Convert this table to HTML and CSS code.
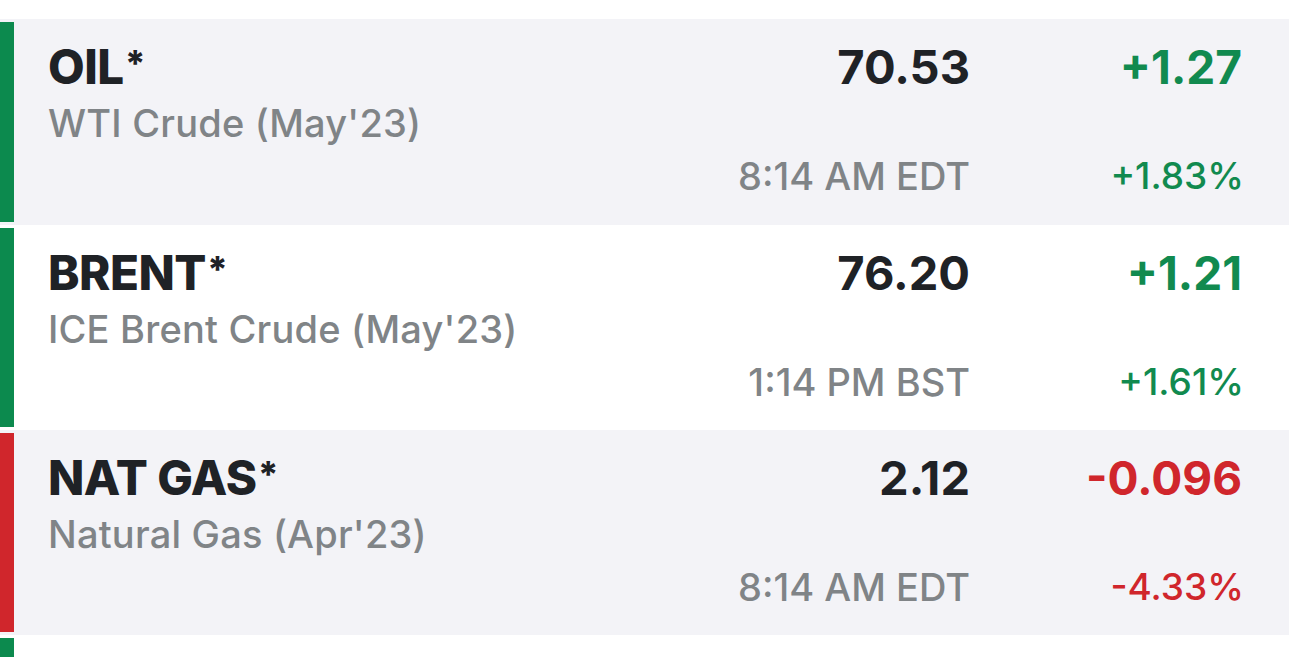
FILE: index.html
```html
<!DOCTYPE html>
<html>
<head>
<meta charset="utf-8">
<link rel="stylesheet" href="styles.css">
</head>
<body>
<div class="list">
  <div class="quote up shaded">
    <div class="bar"></div>
    <div class="body">
      <div class="name">OIL<span class="star">*</span></div>
      <div class="desc">WTI Crude (May'23)</div>
      <div class="price">70.53</div>
      <div class="chg">+1.27</div>
      <div class="time">8:14 AM EDT</div>
      <div class="pct">+1.83%</div>
    </div>
  </div>
  <div class="quote up">
    <div class="bar"></div>
    <div class="body">
      <div class="name">BRENT<span class="star">*</span></div>
      <div class="desc">ICE Brent Crude (May'23)</div>
      <div class="price">76.20</div>
      <div class="chg">+1.21</div>
      <div class="time">1:14 PM BST</div>
      <div class="pct">+1.61%</div>
    </div>
  </div>
  <div class="quote down shaded">
    <div class="bar"></div>
    <div class="body">
      <div class="name">NAT GAS<span class="star">*</span></div>
      <div class="desc">Natural Gas (Apr'23)</div>
      <div class="price">2.12</div>
      <div class="chg">-0.096</div>
      <div class="time">8:14 AM EDT</div>
      <div class="pct">-4.33%</div>
    </div>
  </div>
  <div class="quote up">
    <div class="bar"></div>
    <div class="body"></div>
  </div>
</div>
</body>
</html>
```

FILE: styles.css
```css
html, body {
  margin: 0;
  padding: 0;
  background: #ffffff;
}

body {
  font-family: "Inter", "Liberation Sans", sans-serif;
  overflow: hidden;
  height: 657px;
}

.list {
  padding-top: 19px;
  display: flex;
  flex-direction: column;
}

.quote {
  display: flex;
  height: 205px;
  flex-shrink: 0;
  background: #ffffff;
}

.quote:first-child {
  height: 206px;
}

.quote.shaded {
  background: #f3f3f7;
}

.bar {
  width: 14px;
  margin: 3px 0;
  flex-shrink: 0;
}

.up .bar {
  background: #0c8a4e;
}

.down .bar {
  background: #d0262c;
}

.body {
  flex: 1;
  display: grid;
  grid-template-columns: 1fr auto 272px;
  grid-template-rows: 56px 56px 50px;
  padding: 20px 47px 0 34px;
}

.name {
  grid-column: 1;
  grid-row: 1;
  font-size: 47.5px;
  line-height: 56px;
  font-weight: 800;
  color: #1f2226;
  letter-spacing: -0.5px;
}

.star {
  font-size: 36px;
  vertical-align: 8px;
  line-height: 0;
  margin-left: 1px;
}

.desc {
  grid-column: 1;
  grid-row: 2;
  font-size: 38px;
  line-height: 56px;
  font-weight: 500;
  color: #808487;
  letter-spacing: 0.2px;
}

.price {
  grid-column: 2;
  grid-row: 1;
  text-align: right;
  font-size: 47px;
  line-height: 56px;
  font-weight: 700;
  color: #1f2226;
}

.chg {
  grid-column: 3;
  grid-row: 1;
  text-align: right;
  font-size: 46px;
  line-height: 56px;
  font-weight: 700;
}

.time {
  grid-column: 2;
  grid-row: 3;
  text-align: right;
  font-size: 38px;
  line-height: 50px;
  font-weight: 500;
  color: #808487;
}

.pct {
  grid-column: 3;
  grid-row: 3;
  text-align: right;
  font-size: 37px;
  line-height: 50px;
  font-weight: 500;
  margin-right: -2px;
}

.up .chg, .up .pct {
  color: #118a4f;
}

.down .chg, .down .pct {
  color: #d0262c;
}
```
